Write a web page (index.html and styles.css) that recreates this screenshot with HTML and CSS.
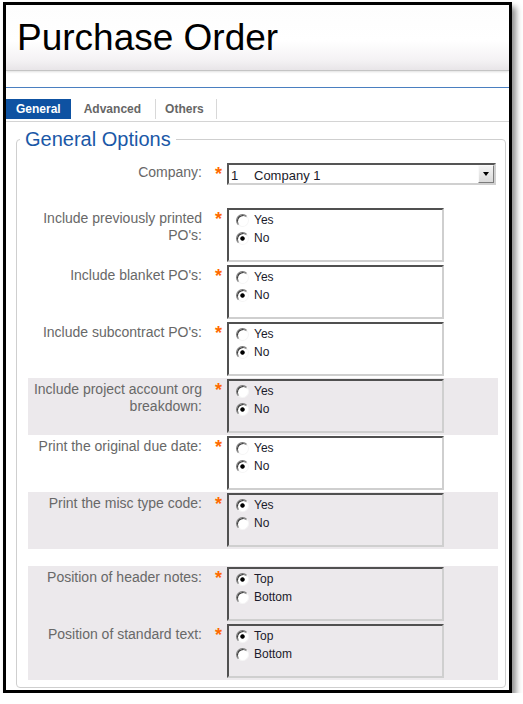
FILE: index.html
```html
<!DOCTYPE html>
<html lang="en">
<head>
<meta charset="utf-8">
<title>Purchase Order</title>
<link rel="stylesheet" href="styles.css">
</head>
<body>
<div class="frame">
  <header class="title-bar"><h1 class="title">Purchase Order</h1></header>
  <nav class="tabbar">
    <span class="tab tab-active">General</span>
    <span class="tab tab-advanced">Advanced</span>
    <span class="tab tab-others">Others</span>
  </nav>
  <fieldset class="options">
    <legend class="legend">General Options</legend>

    <div class="row row-company">
      <div class="label">Company:</div>
      <div class="req">*</div>
      <div class="select">
        <span class="sel-code">1</span>
        <span class="sel-name">Company 1</span>
        <span class="sel-btn"></span>
      </div>
    </div>

    <div class="row">
      <div class="label">Include previously printed PO's:</div>
      <div class="req">*</div>
      <div class="radio-box">
        <div class="opt"><span class="radio"></span>Yes</div>
        <div class="opt"><span class="radio checked"></span>No</div>
      </div>
    </div>

    <div class="row">
      <div class="label">Include blanket PO's:</div>
      <div class="req">*</div>
      <div class="radio-box">
        <div class="opt"><span class="radio"></span>Yes</div>
        <div class="opt"><span class="radio checked"></span>No</div>
      </div>
    </div>

    <div class="row">
      <div class="label">Include subcontract PO's:</div>
      <div class="req">*</div>
      <div class="radio-box">
        <div class="opt"><span class="radio"></span>Yes</div>
        <div class="opt"><span class="radio checked"></span>No</div>
      </div>
    </div>

    <div class="row row-shaded">
      <div class="label">Include project account org breakdown:</div>
      <div class="req">*</div>
      <div class="radio-box">
        <div class="opt"><span class="radio"></span>Yes</div>
        <div class="opt"><span class="radio checked"></span>No</div>
      </div>
    </div>

    <div class="row">
      <div class="label">Print the original due date:</div>
      <div class="req">*</div>
      <div class="radio-box">
        <div class="opt"><span class="radio"></span>Yes</div>
        <div class="opt"><span class="radio checked"></span>No</div>
      </div>
    </div>

    <div class="row row-shaded">
      <div class="label">Print the misc type code:</div>
      <div class="req">*</div>
      <div class="radio-box">
        <div class="opt"><span class="radio checked"></span>Yes</div>
        <div class="opt"><span class="radio"></span>No</div>
      </div>
    </div>

    <div class="row row-shaded row-group">
      <div class="label">Position of header notes:</div>
      <div class="req">*</div>
      <div class="radio-box">
        <div class="opt"><span class="radio checked"></span>Top</div>
        <div class="opt"><span class="radio"></span>Bottom</div>
      </div>
    </div>

    <div class="row row-shaded">
      <div class="label">Position of standard text:</div>
      <div class="req">*</div>
      <div class="radio-box">
        <div class="opt"><span class="radio checked"></span>Top</div>
        <div class="opt"><span class="radio"></span>Bottom</div>
      </div>
    </div>
  </fieldset>
</div>
</body>
</html>
```

FILE: styles.css
```css
* { box-sizing: border-box; }

html, body {
  margin: 0;
  padding: 0;
  background: #fff;
}

body {
  font-family: "Liberation Sans", Arial, sans-serif;
}

.frame {
  margin: 2px 0 0 3px;
  width: 509px;
  border: 3px solid #000;
  background: #fff;
  box-shadow: 4px 5px 6px rgba(0, 0, 0, 0.45);
}

/* Title */
.title-bar {
  height: 66px;
  padding: 13px 0 0 11px;
  background: linear-gradient(to bottom, #fdfdfd 0%, #fff 55%, #f4f2f4 85%, #e8e5e8 100%);
  border-bottom: 1px solid #c4c4c4;
  box-shadow: 0 1px 2px rgba(0, 0, 0, 0.12);
}

.title {
  margin: 0;
  font-family: "Liberation Sans", Arial, sans-serif;
  font-weight: normal;
  font-size: 37px;
  line-height: 40px;
  color: #000;
}

/* Tabs */
.tabbar {
  display: flex;
  margin-top: 16px;
  padding: 11px 0 2px;
  border-top: 1px solid #4a7fc0;
  border-bottom: 1px solid #d4d4d4;
}

.tab {
  height: 20px;
  line-height: 20px;
  font-size: 12px;
  font-weight: bold;
  color: #666;
}

.tab-active {
  padding: 0 10px;
  background: #0e52a2;
  color: #fff;
}

.tab-advanced {
  padding: 0 14px 0 13px;
  border-right: 1px solid #d8d8d8;
}

.tab-others {
  padding: 0 12px 0 9px;
  border-right: 1px solid #d8d8d8;
}

/* Fieldset */
.options {
  margin: 6px 3px 2px 10px;
  padding: 0 7px 7px 11px;
  border: 1px solid #cfcfcf;
  border-radius: 4px;
  min-width: 0;
}

.legend {
  margin-left: -8px;
  padding: 0 5px;
  font-size: 20px;
  line-height: 22px;
  color: #1a58a7;
}

/* Rows */
.row {
  display: grid;
  grid-template-columns: 174px 25px 1fr;
  align-items: start;
  padding: 1px 0 2px;
}

.row-shaded {
  background: #ece9ec;
}

.row-group {
  margin-top: 17px;
}

.row-company {
  padding: 13px 0 22px;
}

.label {
  padding-top: 2px;
  text-align: right;
  font-size: 14px;
  line-height: 17px;
  color: #686868;
}

.row-company .label {
  padding-top: 1px;
}

.req {
  padding: 3px 0 0 13px;
  font-size: 18px;
  font-weight: bold;
  line-height: 17px;
  color: #ff6a00;
}

/* Select */
.select {
  display: flex;
  align-items: flex-start;
  width: 269px;
  height: 22px;
  border: 2px solid;
  border-color: #555 #d0d0d0 #d0d0d0 #555;
  background: #fff;
  font-size: 13px;
  color: #1b1b2b;
}

.sel-code {
  width: 25px;
  padding: 3px 0 0 2px;
  line-height: 16px;
}

.sel-name {
  flex: 1;
  padding-top: 3px;
  line-height: 16px;
}

.sel-btn {
  display: flex;
  align-items: center;
  justify-content: center;
  width: 16px;
  height: 18px;
  border: 1px solid;
  border-color: #fafafa #7c7c7c #7c7c7c #fafafa;
  background: linear-gradient(to bottom, #f4f4f4, #dadada);
}

.sel-btn::before {
  content: "";
  border-left: 3.5px solid transparent;
  border-right: 3.5px solid transparent;
  border-top: 4px solid #000;
}

/* Radio group boxes */
.radio-box {
  width: 217px;
  height: 54px;
  padding: 1px 0 0 7px;
  border: 2px solid;
  border-color: #505050 #cfcfcf #cfcfcf #505050;
}

.opt {
  display: flex;
  align-items: center;
  height: 18px;
  font-size: 12px;
  color: #1b1b2b;
}

.radio {
  flex: none;
  width: 13px;
  height: 13px;
  margin-right: 5px;
  border-radius: 50%;
  border: 1px solid;
  border-color: #7a7a7a #f6f6f6 #f6f6f6 #7a7a7a;
  background: #fff;
  box-shadow: inset 1px 1px 0 #3c3c3c;
}

.radio.checked {
  background: radial-gradient(circle, #000 0, #000 1.8px, #fff 2.6px);
}
```
